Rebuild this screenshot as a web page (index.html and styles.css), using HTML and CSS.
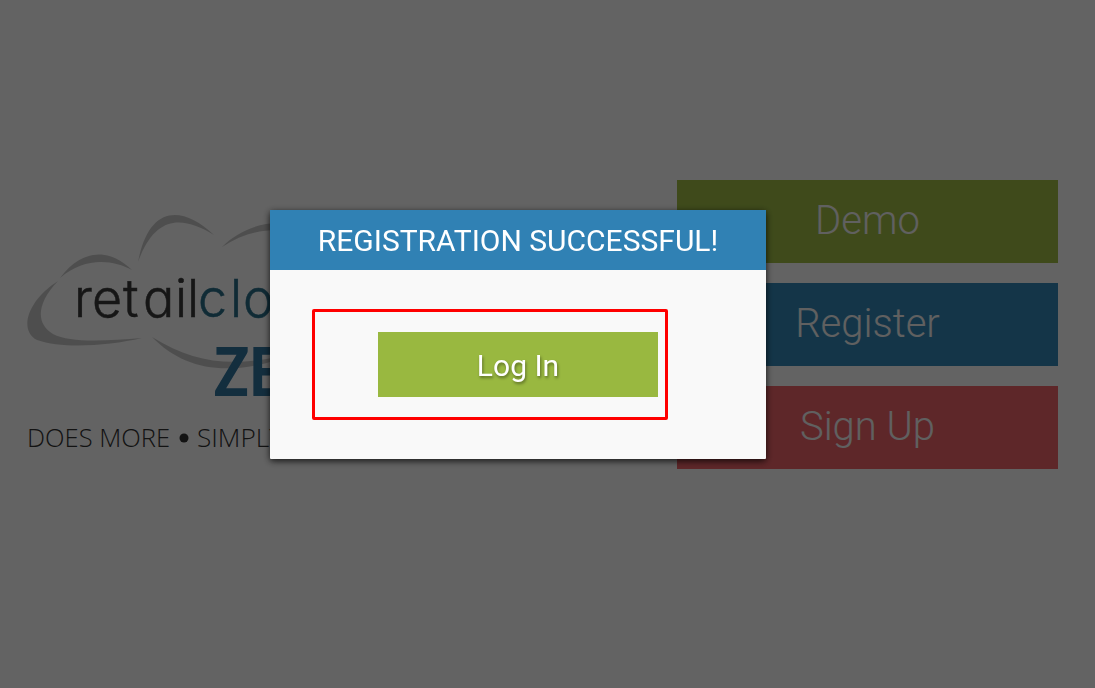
FILE: index.html
```html
<!DOCTYPE html>
<html lang="en">
<head>
    <meta charset="UTF-8">
    <meta name="viewport" content="width=device-width, initial-scale=1.0">
    <title>retailcloud ZERO</title>
    <link rel="stylesheet" href="styles.css">
</head>
<body>

    <div class="page">
        <div class="logo">
            <svg width="500" height="260" viewBox="20 200 500 260">
                <g class="cloud">
                    <path d="M60 278 C82 248 110 248 132 270 C112 259 84 257 60 278 Z" />
                    <path d="M58 281 C28 300 18 330 37 340 C62 349 108 346 142 338 C105 341 70 343 53 334 C36 324 36 304 58 281 Z" />
                    <path d="M138 262 C149 205 182 205 214 235 C184 217 156 213 138 262 Z" />
                    <path d="M222 247 C245 223 290 211 325 240 C290 226 255 225 222 247 Z" />
                    <path d="M152 337 C187 373 235 378 300 352 C240 367 200 367 152 337 Z" />
                </g>
                <text class="retail" x="74 92 123 143 175 187" y="317">retail</text>
                <text class="cloud-text" x="198 230 243 276 308" y="317">cloud</text>
                <text class="zero" x="214" y="396" textLength="152" lengthAdjust="spacingAndGlyphs">ZERO</text>
                <text class="tagline" x="27" y="447" textLength="143" lengthAdjust="spacingAndGlyphs">DOES MORE</text>
                <circle class="dot" cx="184" cy="438" r="4.5" />
                <text class="tagline" x="197" y="447" textLength="86" lengthAdjust="spacingAndGlyphs">SIMPLY</text>
            </svg>
        </div>

        <div class="menu">
            <button class="green">Demo</button>
            <button class="blue">Register</button>
            <button class="red">Sign Up</button>
        </div>
    </div>

    <div class="overlay">
        <div class="modal">
            <h1>REGISTRATION SUCCESSFUL!</h1>
            <div class="modal-body">
                <div class="highlight">
                    <button class="login">Log In</button>
                </div>
            </div>
        </div>
    </div>

</body>
</html>
```
FILE: styles.css
```css
* {
    box-sizing: border-box;
}

body {
    font-family: Roboto, Arial, sans-serif;
    margin: 0;
    height: 688px;
    overflow: hidden;
    background-color: #f8f8f8;
}

.page {
    display: flex;
    justify-content: space-between;
    padding: 180px 37px 0 20px;
}

.logo {
    padding-top: 20px;
}

.logo svg {
    display: block;
}

.cloud {
    fill: #c4c4c4;
}

.retail,
.cloud-text {
    font-family: Inter, sans-serif;
    font-size: 52px;
    font-weight: 300;
    font-feature-settings: "cv11";
    fill: #383838;
    stroke: #383838;
    stroke-width: 0.5px;
}

.cloud-text {
    fill: #286b86;
    stroke: #286b86;
}

.zero {
    font-family: Lato, sans-serif;
    font-size: 67px;
    font-weight: 900;
    fill: #31739b;
}

.tagline {
    font-family: "Open Sans", sans-serif;
    font-size: 26px;
    font-weight: 300;
    fill: #303030;
}

.dot {
    fill: #303030;
}

button {
    border: none;
    border-radius: 0;
    font-family: inherit;
    color: white;
    cursor: pointer;
}

.menu {
    display: flex;
    flex-direction: column;
    gap: 20px;
    width: 381px;
}

.menu button {
    height: 83px;
    padding: 0 0 2px;
    font-size: 40px;
    font-weight: 300;
    color: #f0f0f0;
}

.menu .green {
    background-color: #9dba44;
}

.menu .blue {
    background-color: #3286b5;
}

.menu .red {
    background-color: #eb6267;
}

.overlay {
    position: fixed;
    top: 0;
    left: 0;
    width: 100%;
    height: 100%;
    padding: 210px 0 0 270px;
    background-color: rgba(0, 0, 0, 0.6);
}

.modal {
    width: 496px;
    height: 249px;
    background-color: #f9f9f9;
    border-radius: 1px;
    box-shadow: 0 2px 7px rgba(0, 0, 0, 0.8);
}

.modal h1 {
    margin: 0;
    height: 60px;
    line-height: 62px;
    font-size: 30px;
    font-weight: 400;
    text-align: center;
    color: white;
    background-color: #3081b4;
}

.modal-body {
    padding: 39px 42px;
}

.highlight {
    display: flex;
    justify-content: flex-end;
    width: 356px;
    height: 111px;
    padding: 20px 7px;
    border: 3px solid #ff0000;
    border-radius: 2px;
}

.login {
    width: 280px;
    height: 65px;
    padding: 1px 0 0;
    font-size: 30px;
    background-color: #99b840;
    text-shadow: 1px 2px 3px rgba(0, 0, 0, 0.4);
}
```
